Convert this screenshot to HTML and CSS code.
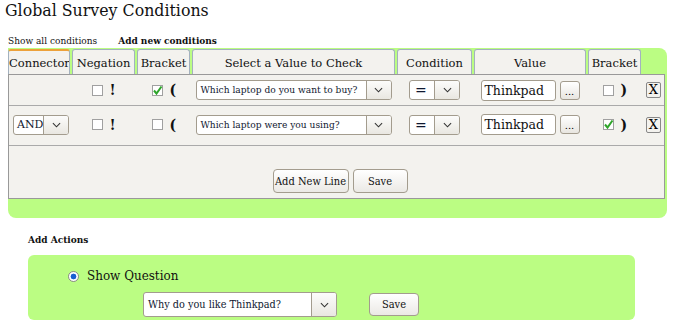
FILE: index.html
```html
<!DOCTYPE html>
<html lang="en">
<head>
    <meta charset="UTF-8">
    <title>Global Survey Conditions</title>
    <link rel="stylesheet" href="styles.css">
</head>
<body>
    <h1>Global Survey Conditions</h1>
    <div class="modes">
        <a class="mode">Show all conditions</a>
        <a class="mode active">Add new conditions</a>
    </div>
    <div class="panel">
        <div class="cols head">
            <div class="tab current">Connector</div>
            <div class="tab">Negation</div>
            <div class="tab">Bracket</div>
            <div class="tab">Select a Value to Check</div>
            <div class="tab">Condition</div>
            <div class="tab">Value</div>
            <div class="tab">Bracket</div>
        </div>
        <div class="box">
            <div class="cols row first">
                <div class="cell"></div>
                <div class="cell"><span class="check"></span><b class="mark">!</b></div>
                <div class="cell"><span class="check"><svg viewBox="0 0 11 11"><path d="M2 5.5 L4.5 8.5 L9.5 1.5" fill="none" stroke="#2fa52a" stroke-width="2"/></svg></span><b class="mark">(</b></div>
                <div class="cell">
                    <span class="dropdown question"><span class="val">Which laptop do you want to buy?</span><span class="arrow"><svg viewBox="0 0 10 6"><path d="M1 1 L5 5 L9 1" fill="none" stroke="#333" stroke-width="1.2"/></svg></span></span>
                </div>
                <div class="cell">
                    <span class="dropdown op"><span class="val">=</span><span class="arrow"><svg viewBox="0 0 10 6"><path d="M1 1 L5 5 L9 1" fill="none" stroke="#333" stroke-width="1.2"/></svg></span></span>
                </div>
                <div class="cell"><span class="text-input">Thinkpad</span><button class="dots">...</button></div>
                <div class="cell"><span class="check"></span><b class="mark">)</b></div>
                <div class="cell end"><button class="remove">X</button></div>
            </div>
            <div class="cols row second">
                <div class="cell left">
                    <span class="dropdown conn"><span class="val">AND</span><span class="arrow"><svg viewBox="0 0 10 6"><path d="M1 1 L5 5 L9 1" fill="none" stroke="#333" stroke-width="1.2"/></svg></span></span>
                </div>
                <div class="cell"><span class="check"></span><b class="mark">!</b></div>
                <div class="cell"><span class="check"></span><b class="mark">(</b></div>
                <div class="cell">
                    <span class="dropdown question"><span class="val">Which laptop were you using?</span><span class="arrow"><svg viewBox="0 0 10 6"><path d="M1 1 L5 5 L9 1" fill="none" stroke="#333" stroke-width="1.2"/></svg></span></span>
                </div>
                <div class="cell">
                    <span class="dropdown op"><span class="val">=</span><span class="arrow"><svg viewBox="0 0 10 6"><path d="M1 1 L5 5 L9 1" fill="none" stroke="#333" stroke-width="1.2"/></svg></span></span>
                </div>
                <div class="cell"><span class="text-input">Thinkpad</span><button class="dots">...</button></div>
                <div class="cell"><span class="check"><svg viewBox="0 0 11 11"><path d="M2 5.5 L4.5 8.5 L9.5 1.5" fill="none" stroke="#2fa52a" stroke-width="2"/></svg></span><b class="mark">)</b></div>
                <div class="cell end"><button class="remove">X</button></div>
            </div>
            <div class="actions">
                <button class="btn add">Add New Line</button>
                <button class="btn save">Save</button>
            </div>
        </div>
    </div>

    <h3 class="sub">Add Actions</h3>
    <div class="action-panel">
        <div class="option"><span class="radio"></span>Show Question</div>
        <div class="pick">
            <span class="dropdown target"><span class="val">Why do you like Thinkpad?</span><span class="arrow"><svg viewBox="0 0 10 6"><path d="M1 1 L5 5 L9 1" fill="none" stroke="#333" stroke-width="1.2"/></svg></span></span>
            <button class="btn save-action">Save</button>
        </div>
    </div>
</body>
</html>
```

FILE: styles.css
```css
body {
    margin: 0;
    font-family: "DejaVu Serif", serif;
    color: #111;
    background: #fff;
}
h1 {
    margin: 0;
    padding: 0 5px;
    font-size: 15.8px;
    font-weight: normal;
    line-height: 22px;
}
.modes {
    display: flex;
    align-items: baseline;
    gap: 21px;
    padding: 12px 0 0 8px;
    font-size: 9px;
    line-height: 14px;
}
.mode.active {
    font-weight: bold;
}
.panel {
    margin: 0 6px 0 8px;
    padding: 1px 2px 19px 0;
    background: #bbfd83;
    border-radius: 0 8px 8px 8px;
}
.cols {
    display: grid;
    grid-template-columns: 62px 63px 53px 203px 75px 112px 53px 1fr;
    column-gap: 2px;
}
.head {
    height: 25px;
}
.tab {
    background: #f3f2ee;
    border: 1px solid #a3b1bf;
    border-bottom: none;
    border-radius: 3px 3px 0 0;
    font-size: 11.5px;
    text-align: center;
    line-height: 26px;
    white-space: nowrap;
    overflow: hidden;
}
.tab.current {
    border-top: 2px solid #eda13a;
    line-height: 25px;
}
.box {
    background: #f3f2ee;
    border: 1px solid #999;
}
.row {
    grid-template-columns: 61px 63px 53px 203px 75px 112px 53px 1fr;
    border-bottom: 1px solid #aaa;
    align-items: center;
}
.row.first {
    height: 30px;
}
.row.second {
    height: 40px;
    padding-bottom: 2px;
    box-sizing: border-box;
}
.cell {
    display: flex;
    justify-content: center;
    align-items: center;
    gap: 5px;
}
.cell.left {
    justify-content: flex-start;
    padding-left: 4px;
}
.cell.end {
    justify-content: flex-start;
    padding-left: 3px;
}
.check {
    display: inline-block;
    width: 11px;
    height: 11px;
    background: #fff;
    border: 1px solid #a0a0a0;
    box-sizing: border-box;
    margin-right: 2px;
}
.check svg {
    display: block;
    width: 11px;
    height: 11px;
    margin: -1px;
}
.mark {
    font-size: 14px;
    line-height: 14px;
    width: 6px;
}
.dropdown {
    display: inline-flex;
    height: 20px;
    background: #fff;
    border: 1px solid #a39c8e;
    border-radius: 3px;
    box-sizing: border-box;
    overflow: hidden;
    font-size: 9.1px;
    color: #101830;
}
.dropdown .val {
    flex: 1;
    padding-left: 4px;
    line-height: 18px;
    white-space: nowrap;
    overflow: hidden;
}
.dropdown .arrow {
    display: flex;
    align-items: center;
    justify-content: center;
    width: 24px;
    border-left: 1px solid #a39c8e;
    background: linear-gradient(#fcfcfb, #e9e7e1);
}
.dropdown .arrow svg {
    width: 9px;
    height: 6px;
}
.question {
    width: 196px;
}
.op {
    width: 51px;
    font-size: 14px;
}
.op .val {
    padding-left: 5px;
}
.conn {
    width: 56px;
    font-size: 11px;
}
.conn .val {
    padding-left: 3px;
}
.text-input {
    display: inline-block;
    width: 75px;
    height: 21px;
    box-sizing: border-box;
    background: #fff;
    border: 1px solid #a39c8e;
    border-radius: 3px;
    padding-left: 3px;
    font-size: 12.5px;
    line-height: 19px;
}
.dots {
    width: 20px;
    height: 19px;
    padding: 0;
    font-family: "DejaVu Serif", serif;
    font-size: 10px;
    line-height: 19px;
    background: linear-gradient(#fff, #e8e6e0);
    border: 1px solid #a39c8e;
    border-radius: 3px;
    margin-left: -1px;
}
.remove {
    width: 15px;
    height: 16px;
    padding: 0;
    font-family: "DejaVu Serif", serif;
    font-size: 13px;
    line-height: 14px;
    background: #f3f2ee;
    border: 1px solid #888;
    border-radius: 2px;
}
.actions {
    display: flex;
    justify-content: center;
    gap: 4px;
    padding: 23px 0 5px 7px;
}
.btn {
    height: 24px;
    font-family: "DejaVu Serif Condensed", "DejaVu Serif", serif;
    font-size: 11px;
    color: #111;
    background: linear-gradient(#fff, #ebe9e5);
    border: 1px solid #a39c8e;
    border-radius: 4px;
}
.add {
    width: 76px;
    padding: 0;
}
.save {
    width: 55px;
}
.sub {
    margin: 16px 0 0 28px;
    font-family: "DejaVu Serif Condensed", "DejaVu Serif", serif;
    font-size: 10px;
    line-height: 12px;
}
.action-panel {
    margin: 9px 38px 0 28px;
    height: 65px;
    box-sizing: border-box;
    background: #bbfd83;
    border-radius: 6px;
    padding: 10px 0 0 40px;
    font-family: "DejaVu Serif Condensed", "DejaVu Serif", serif;
}
.option {
    display: flex;
    align-items: center;
    gap: 8px;
    font-size: 13.3px;
    line-height: 22px;
}
.radio {
    width: 11px;
    height: 11px;
    box-sizing: border-box;
    border: 1px solid #8a8a8a;
    border-radius: 50%;
    background: radial-gradient(circle, #1a5fd0 0 2.6px, #fff 3.2px);
}
.pick {
    display: flex;
    align-items: center;
    gap: 32px;
    padding: 5px 0 0 75px;
}
.target {
    width: 194px;
    height: 25px;
    font-size: 10.8px;
}
.target .val {
    padding-left: 4px;
    line-height: 23px;
}
.save-action {
    width: 50px;
    height: 23px;
}
```
